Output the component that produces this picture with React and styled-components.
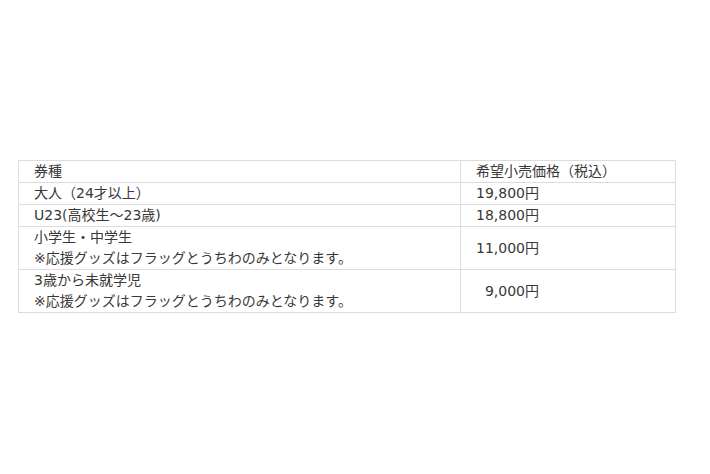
import React from 'react';
import styled, { createGlobalStyle } from 'styled-components';

const GlobalStyle = createGlobalStyle`
  html, body {
    margin: 0;
    padding: 0;
    background: #ffffff;
  }
  body {
    font-family: "DejaVu Sans", "Noto Sans CJK JP", sans-serif;
    color: #333333;
  }
`;

const Page = styled.div`
  width: 710px;
  height: 474px;
  padding: 160px 0 0 18px;
  box-sizing: border-box;
`;

const Table = styled.table`
  width: 658px;
  border-collapse: collapse;
  table-layout: fixed;
  font-size: 14px;
  line-height: 21px;
  color: #383838;
`;

const Cell = styled.td`
  border: 1px solid #dcdcdc;
  padding: 0 0 0 15px;
  vertical-align: middle;
  white-space: nowrap;
  width: ${props => props.width || 'auto'};
`;

const rows = [
  { name: ['大人（24才以上）'], price: '19,800円' },
  { name: ['U23(高校生～23歳)'], price: '18,800円' },
  { name: ['小学生・中学生', '※応援グッズはフラッグとうちわのみとなります。'], price: '11,000円' },
  { name: ['3歳から未就学児', '※応援グッズはフラッグとうちわのみとなります。'], price: '\u20079,000円' },
];

export default function App() {
  return (
    <Page>
      <GlobalStyle />
      <Table>
        <tbody>
          <tr>
            <Cell width="426px">券種</Cell>
            <Cell>希望小売価格（税込）</Cell>
          </tr>
          {rows.map((row, i) => (
            <tr key={i}>
              <Cell>
                {row.name.map((line, j) => (
                  <div key={j}>{line}</div>
                ))}
              </Cell>
              <Cell>{row.price}</Cell>
            </tr>
          ))}
        </tbody>
      </Table>
    </Page>
  );
}
